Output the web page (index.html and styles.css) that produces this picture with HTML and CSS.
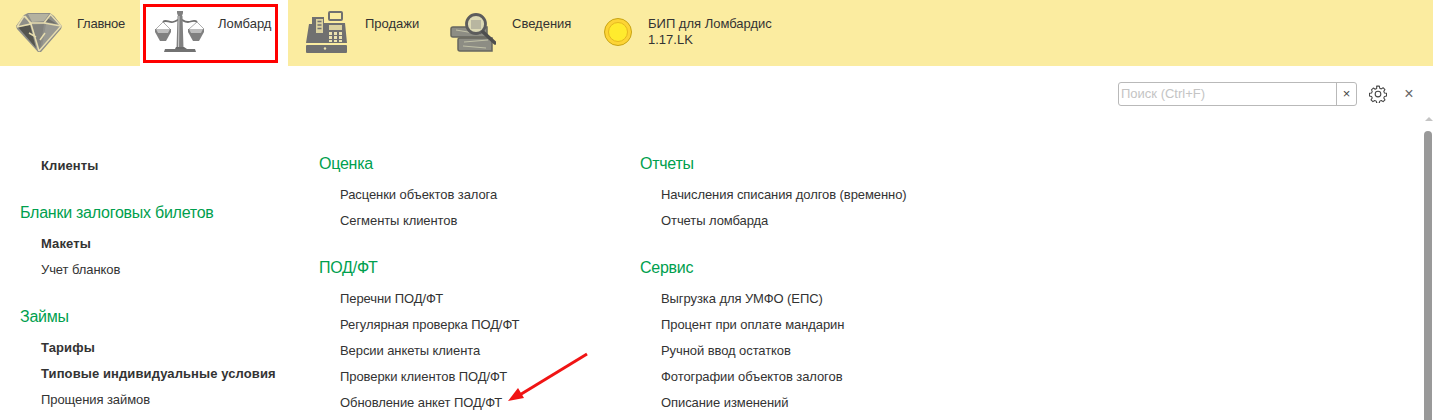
FILE: index.html
```html
<!DOCTYPE html>
<html lang="ru">
<head>
<meta charset="utf-8">
<title>Ломбард</title>
<link rel="stylesheet" href="styles.css">
</head>
<body>
<nav class="topbar">
  <div class="tab tab-main">
    <svg class="ico" viewBox="0 0 48 42" width="48" height="42">
      <path d="M9 3 13 1H35L39 4 47 14 46 17 26 40H23L2 17 1 14Z" fill="#8e8e88"/>
      <path d="M13 2H34L29 9 17 10Z" fill="#b4b2a0"/>
      <path d="M3 15 15 13 21 36Z" fill="#55554f"/>
      <path d="M16 13 29 12 25 37Z" fill="#82827c"/>
      <path d="M31 12 45 14 27 36Z" fill="#9a9a92"/>
      <path d="M32 6 42 12 31 10Z" fill="#6f6f69"/>
      <path d="M9 4 16 11 29 11 36 2M2 15 16 12 24 39M29 11 46 14 24 39M16 12 10 4M9 4 2 15M36 3 46 14M14 21 21 25M30 21 25 28" fill="none" stroke="#e6dcae" stroke-width="1.500"/>
    </svg>
    <span class="tab-label">Главное</span>
  </div>
  <div class="tab tab-active">
    <svg class="ico" viewBox="0 0 50 43" width="50" height="43">
      <path d="M8 12C11 9 14 13 18 12S22 10 25 9C28 10 29 12 33 12S39 9 42 12" fill="none" stroke="#707070" stroke-width="1.800"/>
      <path d="M22 1h6v2l-1 3h-4l-1-3z" fill="#808080"/>
      <path d="M22.500 6h5l1 33h-7z" fill="#808080"/>
      <path d="M24 6 23.500 39" stroke="#cfcfcf" stroke-width="1"/>
      <path d="M21 37h8l3 2H20z" fill="#6a6a6a"/>
      <path d="M10 39H40L41 42H9Z" fill="#727272"/>
      <path d="M8 12 1 19M8 12 15 19M42 12 34 19M42 12 49 19" stroke="#999" stroke-width=".8" fill="none"/>
      <path d="M0 19H16V22L11 31H5L0 22Z" fill="#808080"/>
      <path d="M1 19H15L13 23H3Z" fill="#bdbdbd"/>
      <path d="M33 19H49V22L44 31H38L33 22Z" fill="#808080"/>
      <path d="M34 19H48L46 23H36Z" fill="#bdbdbd"/>
    </svg>
    <span class="tab-label">Ломбард</span>
  </div>
  <div class="tab tab-sales">
    <svg class="ico" viewBox="0 0 46 44" width="46" height="44">
      <rect x="25" y="2" width="13" height="8" rx="1" fill="#fbeca0" stroke="#707070" stroke-width="2"/>
      <path d="M8 7H20V13H41L43 33H2L5 14H8Z" fill="#707070"/>
      <rect x="12" y="9" width="7" height="14" fill="#dcd29f"/>
      <path d="M13.500 11.500h4M13.500 15h4M13.500 18.500h4" stroke="#707070" stroke-width="1.500"/>
      <rect x="25" y="15" width="13" height="5" fill="#dcd29f"/>
      <path d="M25 22h3v3h-3zM30 22h3v3h-3zM35 22h3v3h-3zM25 26h3v3h-3zM30 26h3v3h-3zM35 26h3v3h-3zM25 30h3v2h-3zM30 30h3v2h-3zM35 30h3v2h-3z" fill="#ece3b0"/>
      <rect x="2" y="35" width="41" height="8" rx="1" fill="#707070"/>
      <circle cx="21" cy="38.500" r="1.200" fill="#ece3b0"/>
    </svg>
    <span class="tab-label">Продажи</span>
  </div>
  <div class="tab tab-info">
    <svg class="ico" viewBox="0 0 46 44" width="46" height="44">
      <path d="M3 17H37V27H3Q1 27 1 25V19Q1 17 3 17Z" fill="#8d8d84" stroke="#66665f" stroke-width="1.500"/>
      <path d="M10 28H42V41H10Q8 41 8 39V30Q8 28 10 28Z" fill="#8d8d84" stroke="#66665f" stroke-width="1.500"/>
      <path d="M6 20 30 24M14 32 38 30M13 36 36 38" stroke="#c2c2a8" stroke-width="1"/>
      <circle cx="26" cy="14" r="9.500" fill="#dcd9b4"/>
      <path d="M21 10h10v9H21z" fill="#b8b6a0"/>
      <circle cx="26" cy="14" r="9.500" fill="none" stroke="#5c5c5c" stroke-width="2.800"/>
      <path d="M33 22 45 33" stroke="#4e4e4e" stroke-width="3.500" stroke-linecap="round"/>
    </svg>
    <span class="tab-label">Сведения</span>
  </div>
  <div class="tab tab-bip">
    <svg class="coin" viewBox="0 0 30 30" width="30" height="30">
      <circle cx="15" cy="15" r="13.500" fill="#fdd435" stroke="#c8a415" stroke-width="1"/>
      <circle cx="15" cy="15" r="9.500" fill="#ffeb2e" stroke="#e6b820" stroke-width="1"/>
    </svg>
    <span class="tab-label">БИП для Ломбардис<br>1.17.LK</span>
  </div>
  <div class="red-frame"></div>
</nav>

<div class="toolbar">
  <div class="search">
    <span class="search-input">Поиск (Ctrl+F)</span>
    <span class="search-clear">×</span>
  </div>
  <svg class="gear" viewBox="0 0 24 24" width="18" height="18">
    <path d="M10.200 1.500h3.600l.5 2.800 2.100.9 2.400-1.600 2.500 2.500-1.600 2.400.9 2.100 2.800.5v3.600l-2.800.5-.9 2.100 1.600 2.400-2.500 2.500-2.400-1.600-2.100.9-.5 2.800h-3.600l-.5-2.800-2.100-.9-2.400 1.600-2.500-2.500 1.600-2.400-.9-2.100-2.800-.5v-3.600l2.800-.5.9-2.100L3.300 6.500l2.500-2.500 2.400 1.600 2.100-.9z" fill="none" stroke="#444" stroke-width="1.400" stroke-linejoin="round"/>
    <circle cx="12" cy="12" r="3.800" fill="none" stroke="#444" stroke-width="1.400"/>
  </svg>
  <span class="close">×</span>
</div>

<main class="menu">
  <section class="col col-1">
    <a class="item strong first">Клиенты</a>
    <h2 class="head">Бланки залоговых билетов</h2>
    <a class="item strong">Макеты</a>
    <a class="item">Учет бланков</a>
    <h2 class="head">Займы</h2>
    <a class="item strong">Тарифы</a>
    <a class="item strong">Типовые индивидуальные условия</a>
    <a class="item">Прощения займов</a>
  </section>
  <section class="col col-2">
    <h2 class="head top">Оценка</h2>
    <a class="item">Расценки объектов залога</a>
    <a class="item">Сегменты клиентов</a>
    <h2 class="head">ПОД/ФТ</h2>
    <a class="item">Перечни ПОД/ФТ</a>
    <a class="item">Регулярная проверка ПОД/ФТ</a>
    <a class="item">Версии анкеты клиента</a>
    <a class="item">Проверки клиентов ПОД/ФТ</a>
    <a class="item">Обновление анкет ПОД/ФТ</a>
  </section>
  <section class="col col-3">
    <h2 class="head top">Отчеты</h2>
    <a class="item">Начисления списания долгов (временно)</a>
    <a class="item">Отчеты ломбарда</a>
    <h2 class="head">Сервис</h2>
    <a class="item">Выгрузка для УМФО (ЕПС)</a>
    <a class="item">Процент при оплате мандарин</a>
    <a class="item">Ручной ввод остатков</a>
    <a class="item">Фотографии объектов залогов</a>
    <a class="item">Описание изменений</a>
  </section>
</main>

<svg class="arrow" viewBox="0 0 90 65" width="90" height="65">
  <path d="M87 3 18 45" stroke="#f01414" stroke-width="3" fill="none"/>
  <path d="M8 50 24 47 18 37Z" fill="#f01414"/>
</svg>

<div class="scroll-arrow"></div>
<div class="scroll-thumb"></div>
</body>
</html>
```
FILE: styles.css
```css
html, body {
  margin: 0;
  padding: 0;
  height: 420px;
  overflow: hidden;
  background: #fff;
  font-family: "Liberation Sans", Arial, sans-serif;
  font-size: 13px;
  color: #333;
}

.topbar {
  position: relative;
  display: flex;
  height: 66px;
  background: #fbeca0;
}

.tab {
  display: flex;
  align-items: flex-start;
  box-sizing: border-box;
  height: 66px;
}

.ico { filter: blur(0.3px); }

.tab-label {
  line-height: 16px;
  margin-top: 6px;
}

.tab-main { width: 140px; padding: 12px 0 0 15px; letter-spacing: -0.25px; }
.tab-main .tab-label { margin: 4px 0 0 14px; }

.tab-active { width: 148px; padding: 10px 0 0 15px; background: #fff; }
.tab-active .tab-label { margin-left: 13px; }

.tab-sales { width: 146px; padding: 10px 0 0 16px; }
.tab-sales .tab-label { margin-left: 15px; }

.tab-info { width: 146px; padding: 10px 0 0 16px; }
.tab-info .tab-label { margin-left: 16px; }

.tab-bip { padding: 17px 0 0 23px; }
.tab-bip .tab-label { margin: -1px 0 0 15px; }

.red-frame {
  position: absolute;
  left: 143px;
  top: 4px;
  width: 129px;
  height: 53px;
  border: 3px solid #f00;
}

.toolbar {
  display: flex;
  align-items: center;
  justify-content: flex-end;
  height: 24px;
  margin-top: 16px;
  padding-right: 17px;
}

.search {
  display: flex;
  box-sizing: border-box;
  width: 239px;
  height: 24px;
  border: 1px solid #b9b9b9;
  border-radius: 3px;
}

.search-input {
  flex: 1;
  padding-left: 2px;
  line-height: 22px;
  color: #c4c4c4;
}

.search-clear {
  width: 19px;
  border-left: 1px solid #b9b9b9;
  text-align: center;
  line-height: 21px;
  color: #444;
}

.gear { margin-left: 12px; }

.close {
  width: 14px;
  margin-left: 15px;
  text-align: center;
  font-size: 16px;
  color: #666;
}

.menu {
  display: flex;
  margin-top: 47px;
  padding-left: 20px;
}

.col { display: flex; flex-direction: column; align-items: flex-start; }
.col-1 { width: 299px; }
.col-2 { width: 321px; }

.head {
  margin: 23px 0 0;
  font-size: 16px;
  font-weight: 400;
  line-height: 21px;
  letter-spacing: -0.25px;
  color: #00a04e;
}

.head.top { margin-top: 0; }
.head + .item { margin-top: 8px; }

.item {
  display: block;
  margin-left: 21px;
  line-height: 26px;
  letter-spacing: -0.08px;
  white-space: nowrap;
}

.item.strong { font-weight: 700; letter-spacing: 0.1px; }

.arrow {
  position: absolute;
  left: 500px;
  top: 351px;
}

.scroll-arrow {
  position: absolute;
  left: 1425px;
  top: 117px;
  border-left: 4px solid transparent;
  border-right: 4px solid transparent;
  border-bottom: 4px solid #c4c4c4;
}

.scroll-thumb {
  position: absolute;
  left: 1424px;
  top: 131px;
  width: 8px;
  height: 289px;
  border-radius: 4px 4px 0 0;
  background: #999;
}
```
